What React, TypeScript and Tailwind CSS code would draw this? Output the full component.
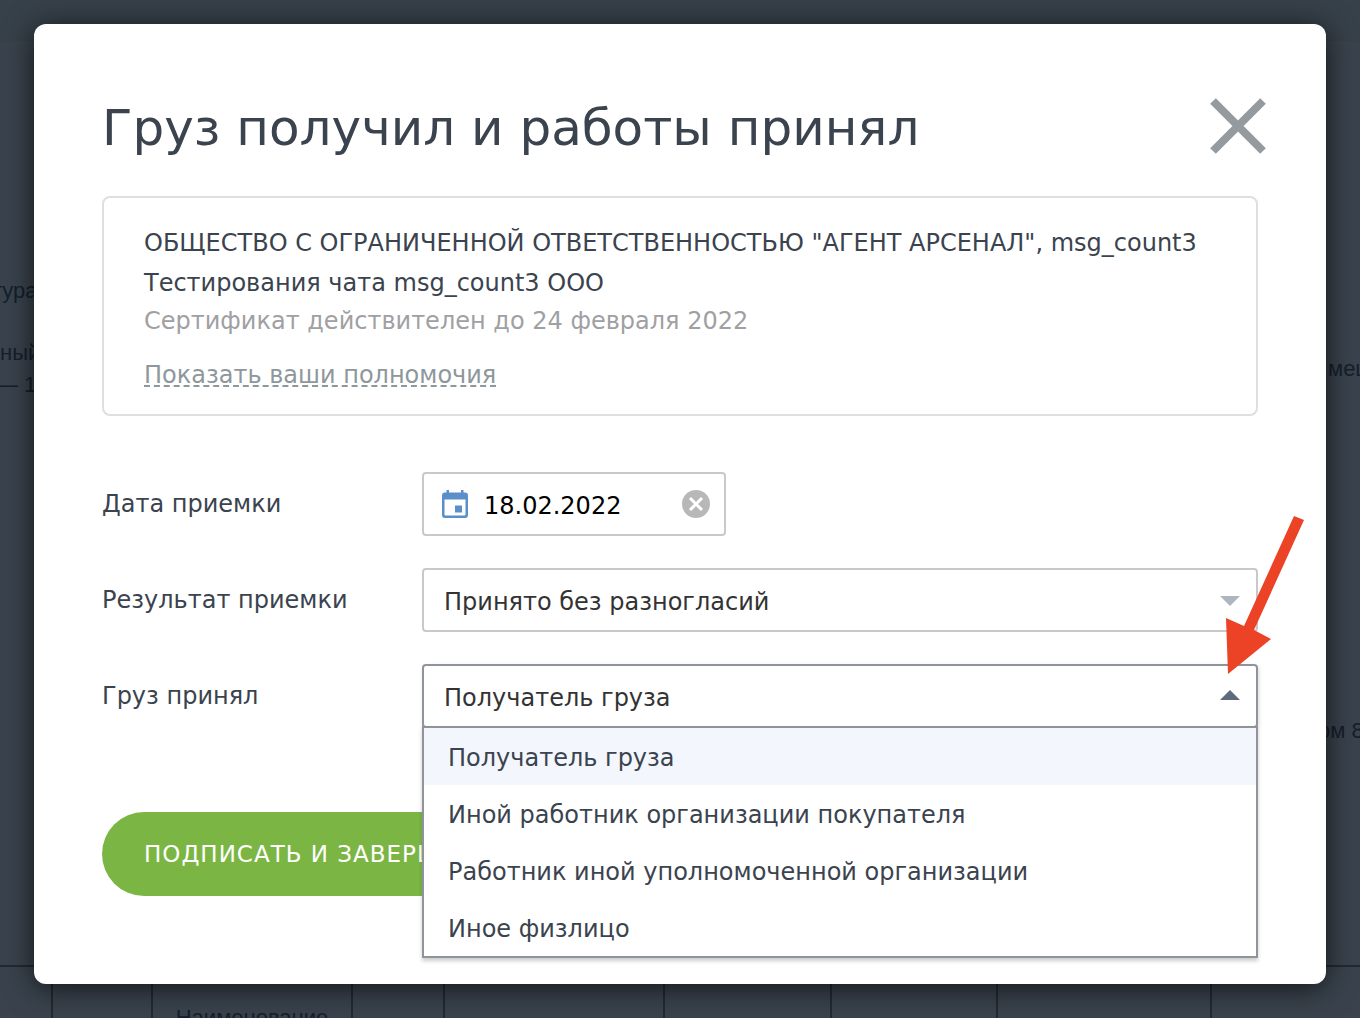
import React, { useState } from "react";

const acceptors = [
  "Получатель груза",
  "Иной работник организации покупателя",
  "Работник иной уполномоченной организации",
  "Иное физлицо",
];

function CalendarIcon() {
  return (
    <svg viewBox="0 0 26 30" className="h-[30px] w-[26px] shrink-0" aria-hidden="true">
      <path
        fill="#5b8fc9"
        fillRule="evenodd"
        d="M4.500 1h2.500v2.500h12V1h2.500v2.500H23a3 3 0 0 1 3 3V26a3 3 0 0 1-3 3H3a3 3 0 0 1-3-3V6.500a3 3 0 0 1 3-3h1.500zM2.500 10.500v15a1 1 0 0 0 1 1h19a1 1 0 0 0 1-1v-15zM13 16.500h7v7h-7z"
      />
    </svg>
  );
}

function ClearIcon() {
  return (
    <svg viewBox="0 0 28 28" className="size-7" aria-hidden="true">
      <circle cx="14" cy="14" r="14" fill="#b8b8b8" />
      <path d="M8 8l12 12M20 8L8 20" stroke="#fff" strokeWidth="3" />
    </svg>
  );
}

function Backdrop() {
  return (
    <div className="flex min-h-[1018px] flex-col overflow-hidden bg-[#3a434d] font-['Liberation_Sans',sans-serif] text-[22px] leading-8 whitespace-nowrap text-[#14202c]">
      <div className="h-[41px] bg-[#37414a]" />
      <div className="flex h-[924px] justify-between">
        <div className="flex w-[34px] flex-col pt-[234px]">
          <p className="-ml-2">тура</p>
          <p className="mt-[30px]">ный</p>
          <p className="-ml-1">— 1</p>
        </div>
        <div className="flex w-[42px] flex-col pt-[312px]">
          <p className="ml-[10px]">мещ</p>
          <p className="mt-[330px]">ом 8</p>
        </div>
      </div>
      <table className="h-[53px] w-full table-fixed border-t-2 border-[#212a34]">
        <tbody>
          <tr className="align-top">
            <td className="w-[52px] border-r-2 border-[#212a34]" />
            <td className="w-[100px] border-r-2 border-[#212a34]" />
            <td className="w-[200px] border-r-2 border-[#212a34] pt-[35px] text-center leading-8">
              <div className="h-4">Наименование</div>
            </td>
            <td className="w-[92px] border-r-2 border-[#212a34]" />
            <td className="w-[220px] border-r-2 border-[#212a34]" />
            <td className="w-[167px] border-r-2 border-[#212a34]" />
            <td className="w-[166px] border-r-2 border-[#212a34]" />
            <td className="w-[214px] border-r-2 border-[#212a34]" />
            <td />
          </tr>
        </tbody>
      </table>
    </div>
  );
}

export default function App() {
  const [date, setDate] = useState("18.02.2022");
  const [result, setResult] = useState("Принято без разногласий");
  const [acceptor, setAcceptor] = useState(acceptors[0]);
  const [open, setOpen] = useState(true);

  return (
    <div className="relative overflow-hidden">
      <Backdrop />
      <div className="absolute inset-0 px-[34px] pt-6 font-['DejaVu_Sans',sans-serif] text-2xl text-[#3a434e]">
        <div
          role="dialog"
          aria-labelledby="dialog-title"
          className="rounded-xl bg-white px-[68px] pt-[72px] pb-[88px] shadow-[0_4px_30px_rgba(0,0,0,0.7)]"
        >
          <header className="flex items-start justify-between">
            <h1 id="dialog-title" className="text-[50px] leading-[64px] whitespace-nowrap">
              Груз получил и работы принял
            </h1>
            <button type="button" aria-label="Закрыть" className="-mr-2 pt-0.5">
              <svg viewBox="0 0 56 56" className="size-14" aria-hidden="true">
                <path d="M3 3l50 50M53 3L3 53" stroke="#949a9e" strokeWidth="8" />
              </svg>
            </button>
          </header>

          <section className="mt-9 rounded-lg border-2 border-[#dedfe0] px-10 pt-[25px] pb-[19px]">
            <p className="leading-10 whitespace-nowrap">
              ОБЩЕСТВО С ОГРАНИЧЕННОЙ ОТВЕТСТВЕННОСТЬЮ "АГЕНТ АРСЕНАЛ", msg_count3
              <br />
              Тестирования чата msg_count3 ООО
            </p>
            <p className="leading-9 text-[#9fa0a3]">Сертификат действителен до 24 февраля 2022</p>
            <p className="mt-4 leading-10">
              <a
                href="#powers"
                className="text-[#8e979c] underline decoration-dashed decoration-2 underline-offset-2 [text-decoration-skip-ink:none]"
              >
                Показать ваши полномочия
              </a>
            </p>
          </section>

          <form onSubmit={(e) => e.preventDefault()}>
            <div className="mt-14 grid grid-cols-[320px_1fr] items-center gap-y-8">
              <label htmlFor="date">Дата приемки</label>
              <div className="flex h-16 w-[304px] items-center rounded border-2 border-[#c9c9c9] pr-3.5 pl-[18px]">
                <CalendarIcon />
                <input
                  id="date"
                  value={date}
                  onChange={(e) => setDate(e.target.value)}
                  className="ml-4 w-0 min-w-0 flex-1 pt-[3px] text-black outline-none"
                />
                <button type="button" aria-label="Очистить дату" onClick={() => setDate("")}>
                  <ClearIcon />
                </button>
              </div>

              <label htmlFor="result">Результат приемки</label>
              <div className="relative">
                <select
                  id="result"
                  value={result}
                  onChange={(e) => setResult(e.target.value)}
                  className="block h-16 w-full appearance-none rounded border-2 border-[#c9c9c9] px-5 pt-[3px] text-[#333] outline-none"
                >
                  <option>Принято без разногласий</option>
                </select>
                <svg
                  viewBox="0 0 20 10"
                  className="pointer-events-none absolute top-7 right-[18px] h-[10px] w-5"
                  aria-hidden="true"
                >
                  <path d="M0 0h20L10 10z" fill="#adb5bf" />
                </svg>
                <svg
                  viewBox="0 0 80 160"
                  className="pointer-events-none absolute -top-[54px] -right-[47px] z-20 h-40 w-20"
                  aria-hidden="true"
                >
                  <path d="M69 2l10 4L29 116l17 9L3 160L1 104l18 8z" fill="#ec4226" />
                </svg>
              </div>

              <label htmlFor="acceptor">Груз принял</label>
              <div className="relative">
                <select
                  id="acceptor"
                  value={acceptor}
                  onMouseDown={(e) => {
                    e.preventDefault();
                    setOpen(!open);
                  }}
                  onChange={(e) => setAcceptor(e.target.value)}
                  className="block h-16 w-full appearance-none rounded border-2 border-[#8e9499] px-5 pt-[3px] text-[#333] shadow-[1px_2px_4px_rgba(0,0,0,0.15)] outline-none"
                >
                  {acceptors.map((a) => (
                    <option key={a}>{a}</option>
                  ))}
                </select>
                <svg
                  viewBox="0 0 20 10"
                  className="pointer-events-none absolute top-[26px] right-[18px] h-[10px] w-5"
                  aria-hidden="true"
                >
                  <path d="M0 10h20L10 0z" fill="#5d6b7e" />
                </svg>
                {open && (
                  <ul
                    role="listbox"
                    aria-label="Груз принял"
                    className="absolute inset-x-0 top-[62px] z-10 border-2 border-[#8e9499] bg-white shadow-[0_3px_4px_rgba(0,0,0,0.2)]"
                  >
                    {acceptors.map((a) => (
                      <li
                        key={a}
                        role="option"
                        aria-selected={a === acceptor}
                        onClick={() => {
                          setAcceptor(a);
                          setOpen(false);
                        }}
                        className="cursor-pointer px-6 pt-[3px] leading-[54px] aria-selected:bg-[#f3f6fc]"
                      >
                        {a}
                      </li>
                    ))}
                  </ul>
                )}
              </div>
            </div>

            <button
              type="submit"
              className="mt-[84px] block h-[84px] rounded-full bg-[#7bb644] px-[42px] text-[23px] tracking-[1px] text-white"
            >
              ПОДПИСАТЬ И ЗАВЕРШИТЬ
            </button>
          </form>
        </div>
      </div>
    </div>
  );
}
